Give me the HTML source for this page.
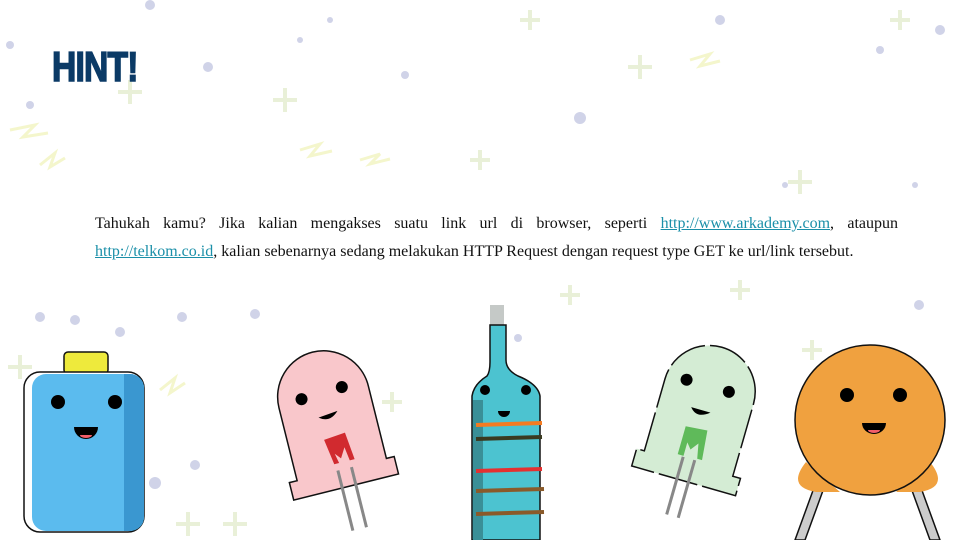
<!DOCTYPE html>
<html><head><meta charset="utf-8"><style>
html,body{margin:0;padding:0}
body{width:960px;height:540px;overflow:hidden;background:#fff;position:relative;font-family:"Liberation Serif",serif}
.h{position:absolute;left:52px;top:45px;font-family:"Liberation Sans Narrow","Liberation Sans",sans-serif;font-weight:bold;font-size:42px;color:#0b3a66;transform:scaleX(0.8);transform-origin:left top;letter-spacing:-1px;line-height:44px;-webkit-text-stroke:1.6px #0b3a66}
.t{position:absolute;left:95px;top:210px;width:803px;font-size:16px;line-height:28px;color:#111;text-align:justify}
.t a{color:#1a8fa8;text-decoration:underline}
svg{position:absolute;left:0;top:0}
</style></head><body>
<svg width="960" height="540" viewBox="0 0 960 540">
<g fill="#d0d3e8">
<circle cx="150" cy="5" r="5"/><circle cx="10" cy="45" r="4"/><circle cx="208" cy="67" r="5"/><circle cx="405" cy="75" r="4"/><circle cx="580" cy="118" r="6"/><circle cx="30" cy="105" r="4"/><circle cx="880" cy="50" r="4"/><circle cx="940" cy="30" r="5"/><circle cx="720" cy="20" r="5"/><circle cx="330" cy="20" r="3"/><circle cx="40" cy="317" r="5"/><circle cx="75" cy="320" r="5"/><circle cx="120" cy="332" r="5"/><circle cx="182" cy="317" r="5"/><circle cx="255" cy="314" r="5"/><circle cx="195" cy="465" r="5"/><circle cx="155" cy="483" r="6"/><circle cx="919" cy="305" r="5"/><circle cx="518" cy="338" r="4"/><circle cx="915" cy="185" r="3"/><circle cx="785" cy="185" r="3"/><circle cx="300" cy="40" r="3"/></g>
<g stroke="#e9f0d8" stroke-width="4" fill="none">
<path d="M130 80v24M118 92h24"/><path d="M285 88v24M273 100h24"/><path d="M640 55v24M628 67h24"/><path d="M900 10v20M890 20h20"/><path d="M20 355v24M8 367h24"/><path d="M235 512v24M223 524h24"/><path d="M188 512v24M176 524h24"/><path d="M570 285v20M560 295h20"/><path d="M800 170v24M788 182h24"/><path d="M392 392v20M382 402h20"/><path d="M480 150v20M470 160h20"/><path d="M530 10v20M520 20h20"/><path d="M740 280v20M730 290h20"/><path d="M812 340v20M802 350h20"/></g>
<g stroke="#f4f6cc" stroke-width="3" fill="none">
<path d="M10 130l25 -5-12 12 25-4"/><path d="M300 150l20 -6-10 12 22-5"/><path d="M360 160l20-6-10 10 20-5"/><path d="M690 60l20-6-10 12 20-5"/><path d="M160 390l15-12-5 15 15-10"/><path d="M40 165l15-12-5 14 15-9"/></g>
<!-- battery -->
<rect x="64" y="352" width="44" height="22" rx="4" fill="#eeea3c" stroke="#111" stroke-width="1.5"/>
<rect x="24" y="372" width="120" height="160" rx="16" fill="#fff" stroke="#111" stroke-width="1.5"/>
<rect x="32" y="374" width="112" height="157" rx="14" fill="#5bbbee"/>
<path d="M124 374h6a14 14 0 0 1 14 14v129a14 14 0 0 1-14 14h-6z" fill="#3a97d0"/>
<circle cx="58" cy="402" r="7" fill="#000"/><circle cx="115" cy="402" r="7" fill="#000"/>
<path d="M74 427h24a12 12 0 0 1-24 0z" fill="#000"/><path d="M80 435h12a6 3 0 0 1-12 0z" fill="#f25e6a"/>
<!-- red LED -->
<g transform="rotate(-14 335 430)">
<path d="M286 470v-75a46 46 0 0 1 92 0v75h8v18h-108v-18z" fill="#f9c7cb" stroke="#111" stroke-width="1.5"/>
<circle cx="310" cy="392" r="6" fill="#000"/><circle cx="352" cy="390" r="6" fill="#000"/>
<path d="M322 414q10 8 20 -2z" fill="#000"/>
<path d="M322 437l22-2 3 28h-5l-2-14-6 10-5-6 2 10h-5z" fill="#d12a2f"/>
<path d="M328 470v62M342 470v62" stroke="#888" stroke-width="3"/></g>
<!-- resistor -->
<path d="M490 305h14v20l-14 0z" fill="#c5c9c7"/>
<path d="M490 325h16v35q0 10 12 16q20 8 22 20v144h-68v-144q2-12 15-20q3-4 3-14z" fill="#4cc3d0" stroke="#111" stroke-width="1.5"/>
<path d="M473 400v140h10v-140z" fill="#3a8f97"/>
<circle cx="485" cy="390" r="5" fill="#000"/><circle cx="526" cy="390" r="5" fill="#000"/>
<path d="M498 411h12a6 6 0 0 1-12 0z" fill="#000"/>
<g stroke-width="4"><path d="M476 425l66-2" stroke="#f47b20"/><path d="M476 439l66-2" stroke="#3a3a20"/><path d="M476 471l66-2" stroke="#e53030"/><path d="M476 491l68-2" stroke="#8a5a2a"/><path d="M476 514l68-2" stroke="#8a5a2a"/></g>
<!-- green LED -->
<g transform="rotate(16 700 420)">
<path d="M655 465v-75a46 46 0 0 1 92 0v75h8v18h-108v-18z" fill="#d4ecd4" stroke="#111" stroke-width="1.5" stroke-dasharray="40 5"/>
<circle cx="676" cy="385" r="6" fill="#000"/><circle cx="720" cy="385" r="6" fill="#000"/>
<path d="M688 410q8 10 20 0z" fill="#000"/>
<path d="M688 430l22-2 3 30h-5l-3-15-6 8-5-6 0 14h-6z" fill="#5fba5a"/>
<path d="M694 460v60M706 460v60" stroke="#888" stroke-width="3"/></g>
<!-- capacitor -->
<path d="M795 540l20-55h10l-20 55zM940 540l-20-55h-10l20 55z" fill="#ccc" stroke="#111" stroke-width="1.5"/>
<path d="M806 462q-20 25 10 30h24zM930 462q20 25 -10 30h-24z" fill="#f0a13f"/>
<circle cx="870" cy="420" r="75" fill="#f0a13f" stroke="#111" stroke-width="1.5"/>
<circle cx="847" cy="395" r="7" fill="#000"/><circle cx="900" cy="395" r="7" fill="#000"/>
<path d="M862 423h24a12 11 0 0 1-24 0z" fill="#000"/><path d="M868 430h12a6 3 0 0 1-12 0z" fill="#f25e6a"/>
</svg>
<div class="h">HINT!</div>
<div class="t">Tahukah kamu? Jika kalian mengakses suatu link url di browser, seperti <a>http://www.arkademy.com</a>, ataupun <a>http://telkom.co.id</a>, kalian sebenarnya sedang melakukan HTTP Request dengan request type GET ke url/link tersebut.</div>
</body></html>
